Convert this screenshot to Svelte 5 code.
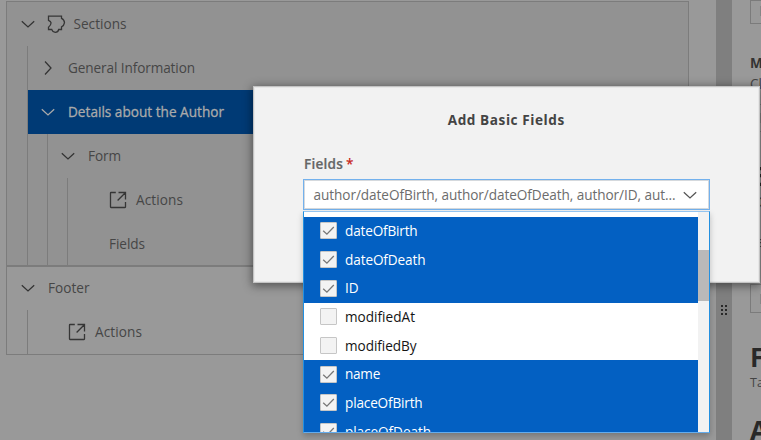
<script>
  const options = [
    { name: 'dateOfBirth', on: true, w: 72.5 },
    { name: 'dateOfDeath', on: true, w: 80.5 },
    { name: 'ID', on: true, w: 13.5 },
    { name: 'modifiedAt', on: false, w: 70 },
    { name: 'modifiedBy', on: false, w: 71.5 },
    { name: 'name', on: true, w: 35 },
    { name: 'placeOfBirth', on: true, w: 77.5 },
    { name: 'placeOfDeath', on: true, w: 86 }
  ];

  // Spreads the letters of a label over the given width
  function fit(node, width) {
    const natural = node.getBoundingClientRect().width;
    const count = node.textContent.length;
    node.style.letterSpacing = (width - natural) / count + 'px';
  }
</script>

{#snippet down()}
  <svg class="chev" width="16" height="16" viewBox="0 0 16 16"><path d="M1.8 5.2 8 11l6.2-5.8" /></svg>
{/snippet}
{#snippet right()}
  <svg class="chev" width="16" height="16" viewBox="0 0 16 16"><path d="M5 1.5 11 8l-6 6.5" /></svg>
{/snippet}
{#snippet action()}
  <svg class="act" width="18" height="18" viewBox="0 0 18 18"><path d="M6.8 1.5H2a.5.5 0 0 0-.5.5v14a.5.5 0 0 0 .5.5h14a.5.5 0 0 0 .5-.5v-5M9.5 1.5h7v7M16.3 1.7 8.6 9.5" /></svg>
{/snippet}

<div class="page">
  <div class="tree">
    <div class="sections">
      <div class="row top">
        {@render down()}
        <svg class="act puzzle" width="20" height="20" viewBox="0 0 20 20"><path d="M2.5 2.2h13v2.2q2.8 1.3 3 4.3-.4 3-3 4.2v2.6h-2.8q-.6 2.7-3.4 2.8-2.8-.3-3.6-2.8H2.5v-2.3q2.4-1.8 2.6-4.4-.3-1.4-2.6-2.4z" /></svg>
        <span use:fit={53}>Sections</span>
      </div>
      <div class="kids">
        <div class="row sub">{@render right()}<span use:fit={127}>General Information</span></div>
        <div class="row sub selected">{@render down()}<span use:fit={156}>Details about the Author</span></div>
        <div class="kids">
          <div class="row sub">{@render down()}<span use:fit={33}>Form</span></div>
          <div class="kids">
            <div class="row leaf">{@render action()}<span use:fit={47}>Actions</span></div>
            <div class="row leaf"><span use:fit={36}>Fields</span></div>
          </div>
        </div>
      </div>
    </div>
    <div class="footer">
      <div class="row top">{@render down()}<span class="flabel" use:fit={41.5}>Footer</span></div>
      <div class="kids">
        <div class="row leaf">{@render action()}<span use:fit={47}>Actions</span></div>
      </div>
    </div>
  </div>

  <div class="splitter">
    <div class="grip">{#each Array(6) as _}<i></i>{/each}</div>
  </div>

  <div class="side">
    <div class="input first"><b></b></div>
    <div class="bold">M</div>
    <div class="small">Cl</div>
    <div class="input mid"><b></b></div>
    <h2 class="e">E</h2>
    <div class="small">ID</div>
    <div class="small lone">La</div>
    <div class="input second"><b></b></div>
    <h2 class="f">F</h2>
    <div class="small tab">Ta</div>
    <h2 class="a">A</h2>
  </div>

  <div class="dialog">
    <div class="title"><span use:fit={117}>Add Basic Fields</span></div>
    <div class="label"><span use:fit={39}>Fields</span><em>*</em></div>
    <div class="combo">
      <span use:fit={362}>author/dateOfBirth, author/dateOfDeath, author/ID, aut...</span>
      {@render down()}
    </div>
    <div class="menu">
      <div class="list">
        {#each options as o}
          <div class="opt" class:on={o.on}>
            <div class="box">
              {#if o.on}
                <svg width="15" height="15" viewBox="0 0 15 15"><path d="M2.2 7.7 5.9 11.2 12.8 4" /></svg>
              {/if}
            </div>
            <span use:fit={o.w}>{o.name}</span>
          </div>
        {/each}
      </div>
      <div class="scroll"><div class="thumb"></div></div>
    </div>
  </div>
</div>

<style>
  .page {
    position: relative;
    display: flex;
    width: 761px;
    height: 440px;
    overflow: hidden;
    background: #999;
    color: #464646;
    font: 13.6px/18px 'Open Sans', 'Noto Sans', sans-serif;
    box-sizing: border-box;
  }
  .page *, .page { box-sizing: border-box; }
  span { flex: none; white-space: pre; }
  svg { flex: none; display: block; fill: none; }
  .chev path { stroke: #333; stroke-width: 1.25; }
  .act path { stroke: #363636; stroke-width: 1.3; }

  .tree {
    flex: none;
    width: 683px;
    height: 354px;
    margin: 1px 0 0 6px;
    border: 1px solid #7c7c7c;
  }
  .sections { height: 265px; background: #929292; border-bottom: 2px solid #7c7c7c; }
  .footer { height: 87px; }
  .sections .kids { height: 219px; }
  .sections .kids .kids { height: 131px; }
  .sections .kids .kids .kids { height: 87px; }
  .kids { margin-left: 20px; border-left: 1px solid #7c7c7c; }
  .kids .kids { margin-left: 19px; }
  .row { display: flex; align-items: center; height: 44px; }
  .top { padding-left: 12.5px; }
  .sub { padding-left: 12px; }
  .sub span { margin-left: 12px; }
  .leaf { padding-left: 41px; }
  .leaf svg { margin-right: 9px; }
  .footer .leaf { padding-left: 40px; }
  .puzzle { margin: 0 7px 0 10.5px; }
  .puzzle + span { margin-left: .5px; }
  .flabel { margin-left: 12.5px; }
  .selected { background: #003a75; color: #aaa; -webkit-text-stroke: .3px #aaa; }
  .selected .chev path { stroke: #aaa; }
  .footer .top { height: 42px; }
  .footer .kids { height: 44px; margin-top: 1px; }

  .splitter { flex: none; width: 16px; margin-left: 27px; background: #7f7f7f; }
  .grip { display: grid; grid-template-columns: 2px 2px; gap: 2px; margin: 305px 0 0 5px; }
  .grip i { width: 2px; height: 2px; background: #292929; }

  .side { flex: none; width: 60px; padding-left: 18px; }
  .input { border: 1px solid #7b7b7b; }
  .input b { display: block; width: 2px; height: 10px; margin-left: 9px; background: #858585; }
  .first { height: 24px; padding-top: 5px; }
  .mid { height: 28px; margin-top: 11px; padding-top: 8px; }
  .second { height: 29px; margin-top: 33px; padding-top: 9px; }
  .bold { margin-top: 30px; font-weight: 700; color: #333; }
  .small { margin-top: 3px; color: #444; }
  h2 { margin: 0; color: #292929; font: 700 26px/28px 'Open Sans', sans-serif; }
  .e { margin-top: 30px; }
  .lone { margin-top: 22px; }
  .f { margin-top: 30px; }
  .tab { font-size: 12.5px; }
  .a { margin-top: 24px; }

  .dialog {
    position: absolute;
    left: 253px;
    top: 86px;
    width: 506.5px;
    height: 197px;
    padding: 24px 49px 0 49px;
    background: #f2f2f2;
    border: 1px solid #c4c4c4;
    box-shadow: 0 2px 9px 1px rgba(0, 0, 0, .45), inset 0 0 0 1px #e7e7e7;
  }
  .title { text-align: center; font-weight: 700; color: #444; }
  .label { display: flex; margin-top: 26px; height: 18px; padding-left: 1px; font-weight: 600; color: #666; }
  .label span { -webkit-text-stroke: .2px #666; }
  .label em { margin-left: 3px; color: #c8281e; font-style: normal; }
  .combo {
    display: flex;
    align-items: center;
    justify-content: space-between;
    width: 407px;
    height: 31px;
    margin-top: 6px;
    padding: 0 11px 0 9.5px;
    background: #fff;
    border: 1px solid #73b1ed;
    box-shadow: inset 0 0 0 1px #d5d9dd;
    color: #6c6c6c;
  }
  .combo .chev path { stroke: #555; }
  .menu {
    display: flex;
    position: absolute;
    left: 49px;
    top: 124px;
    width: 407px;
    height: 222px;
    overflow: hidden;
    background: #fff;
    border: 1px solid #2390e0;
    border-top-color: #94c4f0;
    border-bottom-color: #64acec;
    box-shadow: 0 3px 6px rgba(0, 0, 0, .22);
  }
  .list { width: 394px; height: 220px; padding-top: 5px; overflow: hidden; }
  .opt {
    display: flex;
    align-items: center;
    height: 28.667px;
    padding: 0 0 .7px 16px;
    color: #151515;
  }
  .on { background: #0360c2; color: #fff; }
  .box { width: 17px; height: 17px; margin-right: 8px; background: #f3f3f3; border: 1px solid #c6c6c6; border-radius: 1px; }
  .box path { stroke: #777; stroke-width: 1.3; }
  .scroll { width: 11px; height: 220px; padding-top: 38px; background: #f2f2f2; }
  .thumb { height: 51px; background: #b9b9b9; }
</style>
